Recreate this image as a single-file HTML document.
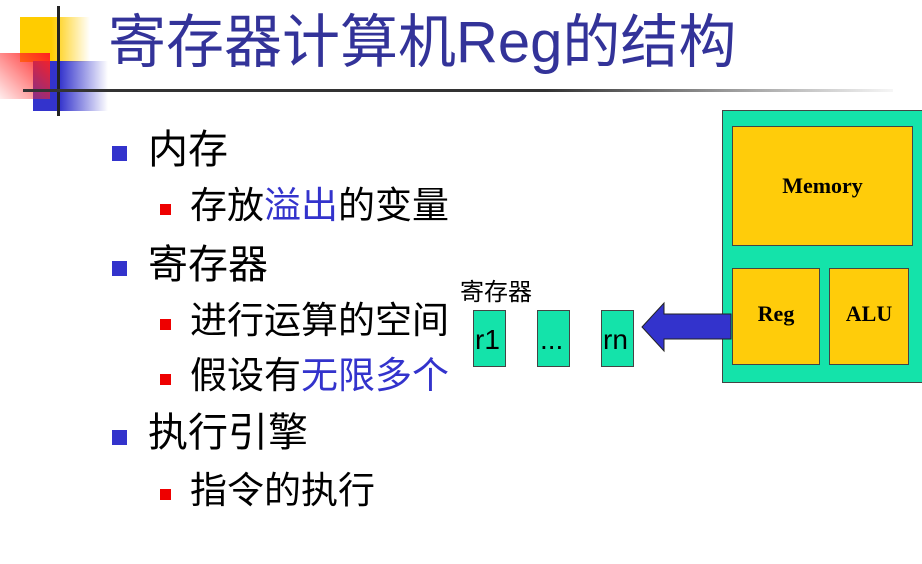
<!DOCTYPE html>
<html><head><meta charset="utf-8"><style>
*{margin:0;padding:0}
body{width:922px;height:564px;background:#fff;position:relative;overflow:hidden;font-family:"Liberation Sans","Noto Sans CJK SC",sans-serif}
.a{position:absolute;white-space:nowrap;line-height:1}
.l1{font-size:40px;color:#000}
.l2{font-size:37px;color:#000}
.b1{position:absolute;width:15px;height:15px;background:#3333cc}
.b2{position:absolute;width:11px;height:11px;background:#ee0000}
.bl{color:#3333cc}
.bx{position:absolute;box-sizing:border-box;border:1.5px solid #444}
.g{background:#14e3aa}.y{background:#ffcc0a}
.t{font-family:"Liberation Serif",serif;font-weight:bold;font-size:22px;display:flex;align-items:center;justify-content:center}
</style></head><body>
<div style="position:absolute;left:20px;top:17px;width:70px;height:45px;background:linear-gradient(90deg,#ffcc00 45%,rgba(255,204,0,0))"></div>
<div style="position:absolute;left:33px;top:61px;width:75px;height:50px;background:linear-gradient(90deg,#3333cc 35%,rgba(51,51,204,0))"></div>
<div style="position:absolute;left:0;top:53px;width:50px;height:46px;background:linear-gradient(225deg,#ff2020,rgba(255,80,80,0.1))"></div>
<div style="position:absolute;left:57px;top:6px;width:3px;height:110px;background:#222"></div>
<div style="position:absolute;left:23px;top:89px;width:870px;height:3px;background:linear-gradient(90deg,#333 60%,rgba(80,80,80,0.05))"></div>
<div class="a" style="left:108px;top:14px;font-size:58px;color:#333399">寄存器计算机Reg的结构</div>

<div class="b1" style="left:112px;top:146px"></div><div class="a l1" style="left:148px;top:130px">内存</div>
<div class="b2" style="left:160px;top:204px"></div><div class="a l2" style="left:190px;top:187px">存放<span class="bl">溢出</span>的变量</div>
<div class="b1" style="left:112px;top:261px"></div><div class="a l1" style="left:148px;top:245px">寄存器</div>
<div class="b2" style="left:160px;top:319px"></div><div class="a l2" style="left:190px;top:302px">进行运算的空间</div>
<div class="b2" style="left:160px;top:374px"></div><div class="a l2" style="left:190px;top:357px">假设有<span class="bl">无限多个</span></div>
<div class="b1" style="left:112px;top:430px"></div><div class="a l1" style="left:148px;top:413px">执行引擎</div>
<div class="b2" style="left:160px;top:489px"></div><div class="a l2" style="left:190px;top:472px">指令的执行</div>

<div class="a" style="left:460px;top:281px;font-size:24px">寄存器</div>
<div class="bx g" style="left:473px;top:310px;width:33px;height:57px"></div><div class="a" style="left:475px;top:326px;font-size:28px">r1</div>
<div class="bx g" style="left:537px;top:310px;width:33px;height:57px"></div><div class="a" style="left:540px;top:326px;font-size:28px">...</div>
<div class="bx g" style="left:601px;top:310px;width:33px;height:57px"></div><div class="a" style="left:603px;top:326px;font-size:28px">rn</div>

<div class="bx g" style="left:722px;top:110px;width:210px;height:273px"></div>
<div class="bx y t" style="left:732px;top:126px;width:181px;height:120px">Memory</div>
<div class="bx y t" style="left:732px;top:268px;width:88px;height:97px;padding-bottom:6px">Reg</div>
<div class="bx y t" style="left:829px;top:268px;width:80px;height:97px;padding-bottom:6px">ALU</div>
<svg style="position:absolute;left:0;top:0" width="922" height="564"><polygon points="642,327 664,303 664,314 731,314 731,339 664,339 664,351" fill="#3333cc" stroke="#222" stroke-width="1"/></svg>
</body></html>
